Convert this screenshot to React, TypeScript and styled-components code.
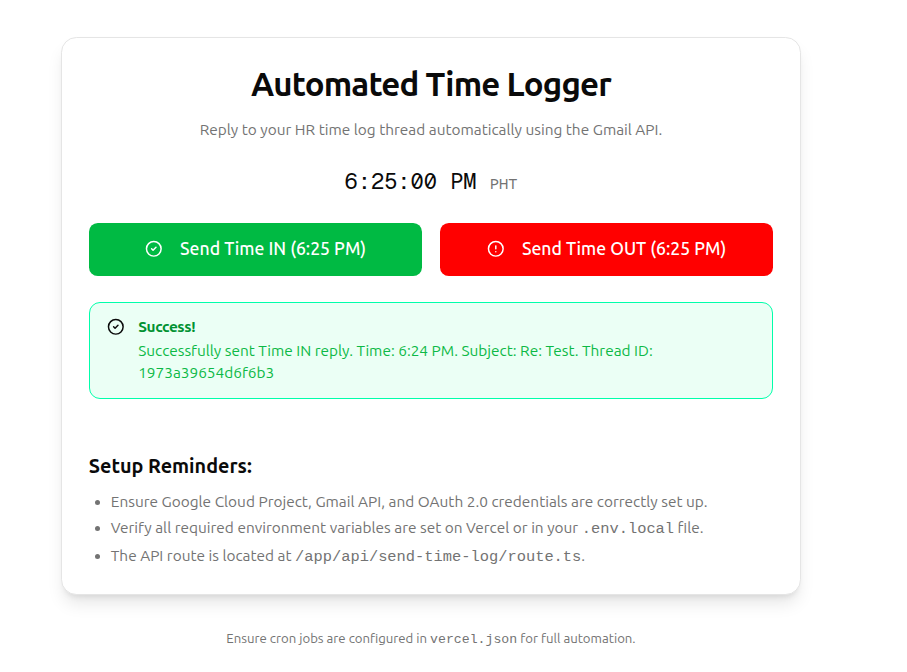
import React from "react";
import styled, { createGlobalStyle } from "styled-components";
import { CircleAlert, CircleCheck } from "lucide-react";

const GlobalStyle = createGlobalStyle`
  *, *::before, *::after { box-sizing: border-box; margin: 0; padding: 0; }
  body {
    background: #fff;
    color: #0a0a0a;
    font-family: Ubuntu, "Noto Sans", sans-serif;
    overflow: hidden;
  }
`;

const Page = styled.main`
  display: flex;
  flex-direction: column;
  align-items: center;
  width: 862px;
  height: 672px;
  padding-top: 37px;
`;

const Card = styled.section`
  display: flex;
  flex-direction: column;
  width: 739.2px;
  height: 558px;
  padding: 26.4px;
  background: #fff;
  border: 1px solid #e5e5e5;
  border-radius: 15.4px;
  box-shadow: 0 11px 16.5px -3.3px rgba(0, 0, 0, 0.1),
    0 4.4px 6.6px -4.4px rgba(0, 0, 0, 0.1);
`;

const Header = styled.header`
  text-align: center;
`;

const Title = styled.h1`
  font-size: 33px;
  line-height: 39.6px;
  font-weight: 700;
  letter-spacing: -0.825px;
`;

const Description = styled.p`
  margin-top: 15.4px;
  font-size: 15.4px;
  line-height: 22px;
  color: #737373;
`;

const Clock = styled.div`
  display: flex;
  justify-content: center;
  align-items: baseline;
  gap: 13.2px;
  height: 30.8px;
  margin-top: 24.4px;
  font-family: "Geist Mono", "Roboto Mono", monospace;
  line-height: 30px;
`;

const ClockTime = styled.span`
  font-size: 22px;
`;

const Zone = styled.span`
  font-size: 15.4px;
  color: #737373;
`;

const Actions = styled.div`
  display: grid;
  grid-template-columns: 1fr 1fr;
  gap: 17.6px;
  margin-top: 26.4px;
`;

const ActionButton = styled.button<{ $tone: "in" | "out" }>`
  display: flex;
  align-items: center;
  justify-content: center;
  gap: 17.6px;
  height: 52.8px;
  border: 0;
  border-radius: 8.8px;
  background: ${(p) => (p.$tone === "in" ? "#00ba43" : "#ff0000")};
  color: #fff;
  font-family: inherit;
  font-size: 17.6px;
  font-weight: 500;
  line-height: 26.4px;
  white-space: nowrap;

  svg { flex: none; margin-bottom: 1.4px; }
`;

const Alert = styled.div`
  display: flex;
  gap: 13.2px;
  height: 97px;
  margin-top: 26.4px;
  padding: 13.2px 17.6px;
  background: #ebfff5;
  border: 1px solid #00ffaa;
  border-radius: 11px;

  svg { flex: none; margin-top: 1.4px; }
`;

const AlertTitle = styled.h2`
  font-size: 15.4px;
  line-height: 22px;
  font-weight: 600;
  letter-spacing: -0.385px;
  color: #009232;
`;

const AlertText = styled.p`
  width: 560px;
  margin-top: 2px;
  font-size: 15.4px;
  line-height: 22px;
  color: #0cb946;
`;

const Reminders = styled.section`
  margin-top: 52px;
`;

const RemindersTitle = styled.h3`
  font-size: 19.8px;
  line-height: 30.8px;
  font-weight: 600;
`;

const ReminderList = styled.ul`
  margin-top: 9px;
  padding-left: 22px;
  list-style: disc;
  font-size: 15.4px;
  line-height: 22px;
  color: #737373;

  li + li { margin-top: 4.4px; }
`;

const Code = styled.code`
  font-family: "Liberation Mono", monospace;
  font-size: 1em;
`;

const Footnote = styled.footer`
  margin-top: 35px;
  font-size: 13.2px;
  line-height: 17.6px;
  color: #737373;
`;

export default function App() {
  return (
    <>
      <GlobalStyle />
      <Page>
        <Card>
          <Header>
            <Title>Automated Time Logger</Title>
            <Description>
              Reply to your HR time log thread automatically using the Gmail API.
            </Description>
          </Header>
          <Clock>
            <ClockTime>6:25:00 PM</ClockTime>
            <Zone>PHT</Zone>
          </Clock>
          <Actions>
            <ActionButton $tone="in">
              <CircleCheck size={17.6} />
              Send Time IN (6:25 PM)
            </ActionButton>
            <ActionButton $tone="out">
              <CircleAlert size={17.6} />
              Send Time OUT (6:25 PM)
            </ActionButton>
          </Actions>
          <Alert role="status">
            <CircleCheck size={17.6} />
            <div>
              <AlertTitle>Success!</AlertTitle>
              <AlertText>
                Successfully sent Time IN reply. Time: 6:24 PM. Subject: Re: Test. Thread ID:
                {" "}1973a39654d6f6b3
              </AlertText>
            </div>
          </Alert>
          <Reminders>
            <RemindersTitle>Setup Reminders:</RemindersTitle>
            <ReminderList>
              <li>Ensure Google Cloud Project, Gmail API, and OAuth 2.0 credentials are correctly set up.</li>
              <li>
                Verify all required environment variables are set on Vercel or in your <Code>.env.local</Code> file.
              </li>
              <li>
                The API route is located at <Code>/app/api/send-time-log/route.ts</Code>.
              </li>
            </ReminderList>
          </Reminders>
        </Card>
        <Footnote>
          Ensure cron jobs are configured in <Code>vercel.json</Code> for full automation.
        </Footnote>
      </Page>
    </>
  );
}
